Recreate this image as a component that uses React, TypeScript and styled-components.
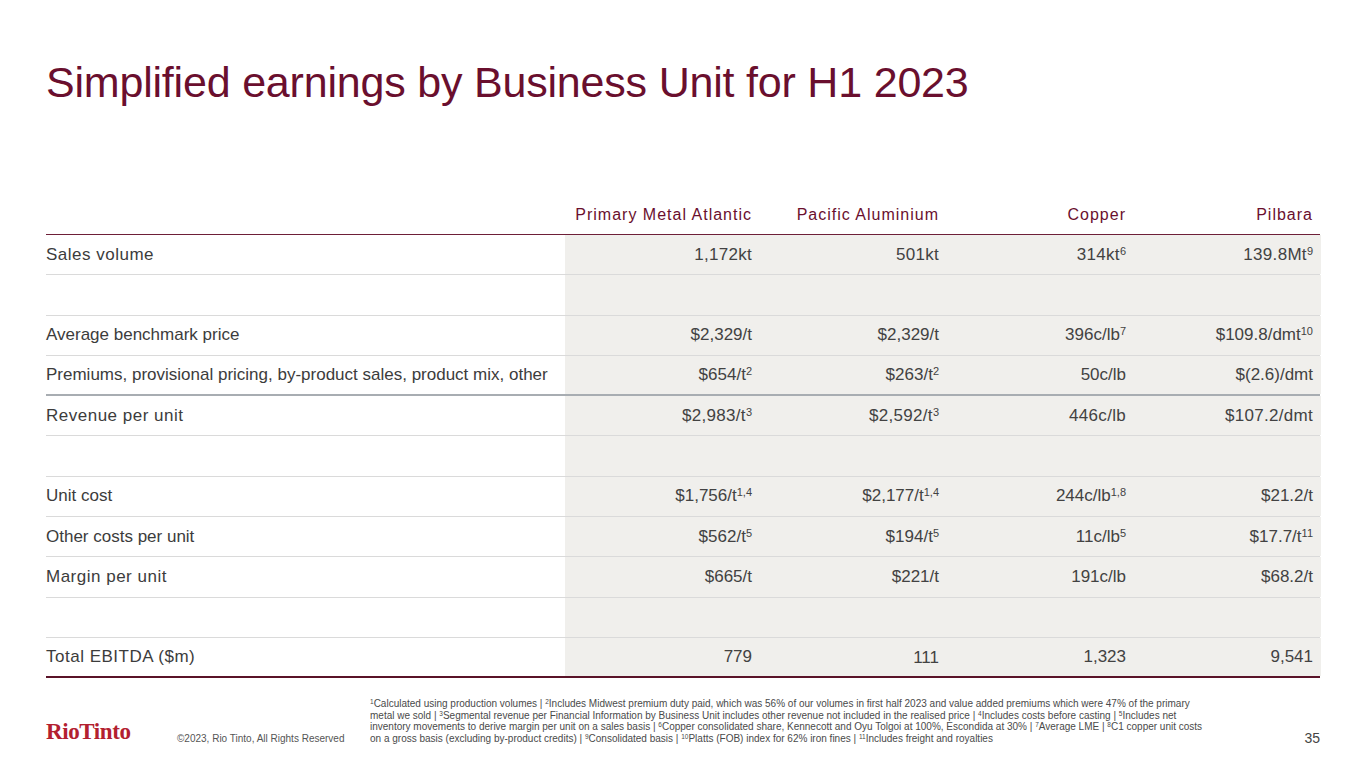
import React from "react";
import styled, { createGlobalStyle } from "styled-components";

const Global = createGlobalStyle`
  html, body { margin: 0; padding: 0; background: #ffffff; }
  body { font-family: "Liberation Sans", Arial, sans-serif; }
`;

const Slide = styled.div`
  width: 1365px;
  height: 768px;
  box-sizing: border-box;
  padding: 57px 45px 0 46px;
  display: flex;
  flex-direction: column;
  background: #fff;
  overflow: hidden;
`;

const Title = styled.h1`
  margin: 0;
  font-family: "Liberation Sans", Arial, sans-serif;
  font-weight: 400;
  font-size: 43px;
  line-height: 50px;
  color: #6a0f2e;
  letter-spacing: -0.2px;
`;

const Table = styled.div`
  margin-top: 88px;
  display: flex;
  flex-direction: column;
`;

const Row = styled.div<{ $border: "maroon" | "light" | "strong" | "end"; $head?: boolean }>`
  display: grid;
  grid-template-columns: 519px 195px 187px 187px 187px;
  height: ${(p) => (p.$head ? "40px" : "40.3px")};
  box-sizing: border-box;
  align-items: stretch;
  border-bottom: ${(p) =>
    p.$border === "maroon"
      ? "1.5px solid #6e1f38"
      : p.$border === "end"
      ? "2px solid #5a1328"
      : p.$border === "strong"
      ? "2px solid #a8adb2"
      : "1px solid #dadada"};
`;

const HeadCell = styled.div`
  display: flex;
  align-items: center;
  justify-content: flex-end;
  padding-right: 8px;
  font-size: 16px;
  letter-spacing: 1px;
  color: #6a0f2e;
  white-space: nowrap;
`;

const LabelCell = styled.div<{ $spaced?: boolean }>`
  display: flex;
  align-items: center;
  font-size: 17px;
  color: #3c3c3c;
  letter-spacing: ${(p) => (p.$spaced ? "0.5px" : "0")};
  white-space: nowrap;
`;

const ValueCell = styled.div<{ $spaced?: boolean; $drop?: number }>`
  display: flex;
  align-items: center;
  justify-content: flex-end;
  padding-right: 8px;
  padding-top: ${(p) => (p.$drop ? `${p.$drop * 2}px` : "0")};
  background: #f0efec;
  font-size: 17px;
  color: #424242;
  letter-spacing: ${(p) => (p.$spaced ? "0.3px" : "0")};
  white-space: nowrap;
`;

const Sup = styled.sup`
  font-size: 11px;
  line-height: 0;
  vertical-align: 0.5em;
  letter-spacing: 0;
`;

const Footer = styled.div`
  margin-top: 20px;
  display: grid;
  grid-template-columns: 131px 193px 1fr auto;
  align-items: end;
`;

const Logo = styled.div`
  font-family: "Liberation Serif", "Times New Roman", serif;
  font-weight: 700;
  font-size: 23px;
  line-height: 22px;
  color: #b3202f;
  letter-spacing: -0.4px;
  padding-bottom: 2px;
`;

const Copyright = styled.div`
  font-size: 10px;
  line-height: 11.6px;
  color: #555;
`;

const Notes = styled.div`
  font-size: 10px;
  line-height: 11.6px;
  color: #4a4a4a;
  white-space: nowrap;
`;

const NoteSup = styled.sup`
  font-size: 6.5px;
  line-height: 0;
  vertical-align: 0.5em;
`;

const PageNum = styled.div`
  font-size: 14px;
  line-height: 14px;
  color: #444;
`;

type V = [string, string?];
type RowData =
  | { blank: true; border?: "light" | "strong" | "end" }
  | {
      blank?: false;
      label: string;
      spaced?: boolean;
      vspaced?: boolean;
      values: V[];
      border?: "light" | "strong" | "end";
    };

const rows: RowData[] = [
  { label: "Sales volume", spaced: true, vspaced: true, values: [["1,172kt"], ["501kt"], ["314kt", "6"], ["139.8Mt", "9"]] },
  { blank: true },
  { label: "Average benchmark price", values: [["$2,329/t"], ["$2,329/t"], ["396c/lb", "7"], ["$109.8/dmt", "10"]] },
  {
    label: "Premiums, provisional pricing, by-product sales, product mix, other",
    values: [["$654/t", "2"], ["$263/t", "2"], ["50c/lb"], ["$(2.6)/dmt"]],
    border: "strong",
  },
  { label: "Revenue per unit", spaced: true, vspaced: true, values: [["$2,983/t", "3"], ["$2,592/t", "3"], ["446c/lb"], ["$107.2/dmt"]] },
  { blank: true },
  { label: "Unit cost", values: [["$1,756/t", "1,4"], ["$2,177/t", "1,4"], ["244c/lb", "1,8"], ["$21.2/t"]] },
  { label: "Other costs per unit", values: [["$562/t", "5"], ["$194/t", "5"], ["11c/lb", "5"], ["$17.7/t", "11"]] },
  { label: "Margin per unit", spaced: true, values: [["$665/t"], ["$221/t"], ["191c/lb"], ["$68.2/t"]] },
  { blank: true },
  { label: "Total EBITDA ($m)", spaced: true, values: [["779"], ["111"], ["1,323"], ["9,541"]], border: "end" },
];

const headers = ["Primary Metal Atlantic", "Pacific Aluminium", "Copper", "Pilbara"];

export default function App() {
  return (
    <>
      <Global />
      <Slide>
        <Title>Simplified earnings by Business Unit for H1 2023</Title>
        <Table>
          <Row $border="maroon" $head>
            <div />
            {headers.map((h) => (
              <HeadCell key={h}>{h}</HeadCell>
            ))}
          </Row>
          {rows.map((r, i) => (
            <Row key={i} $border={r.border ?? "light"}>
              {r.blank ? (
                <>
                  <LabelCell />
                  <ValueCell />
                  <ValueCell />
                  <ValueCell />
                  <ValueCell />
                </>
              ) : (
                <>
                  <LabelCell $spaced={r.spaced}>{r.label}</LabelCell>
                  {r.values.map(([v, s], j) => (
                    <ValueCell key={j} $spaced={r.vspaced} $drop={v === "111" ? 1 : 0}>
                      <span>
                        {v}
                        {s && <Sup>{s}</Sup>}
                      </span>
                    </ValueCell>
                  ))}
                </>
              )}
            </Row>
          ))}
        </Table>
        <Footer>
          <Logo>RioTinto</Logo>
          <Copyright>©2023, Rio Tinto, All Rights Reserved</Copyright>
          <Notes>
            <NoteSup>1</NoteSup>Calculated using production volumes | <NoteSup>2</NoteSup>Includes Midwest premium duty paid, which was 56% of our volumes in first half 2023 and value added premiums which were 47% of the primary
            <br />
            metal we sold | <NoteSup>3</NoteSup>Segmental revenue per Financial Information by Business Unit includes other revenue not included in the realised price | <NoteSup>4</NoteSup>Includes costs before casting | <NoteSup>5</NoteSup>Includes net
            <br />
            inventory movements to derive margin per unit on a sales basis | <NoteSup>6</NoteSup>Copper consolidated share, Kennecott and Oyu Tolgoi at 100%, Escondida at 30% | <NoteSup>7</NoteSup>Average LME | <NoteSup>8</NoteSup>C1 copper unit costs
            <br />
            on a gross basis (excluding by-product credits) | <NoteSup>9</NoteSup>Consolidated basis | <NoteSup>10</NoteSup>Platts (FOB) index for 62% iron fines | <NoteSup>11</NoteSup>Includes freight and royalties
          </Notes>
          <PageNum>35</PageNum>
        </Footer>
      </Slide>
    </>
  );
}
